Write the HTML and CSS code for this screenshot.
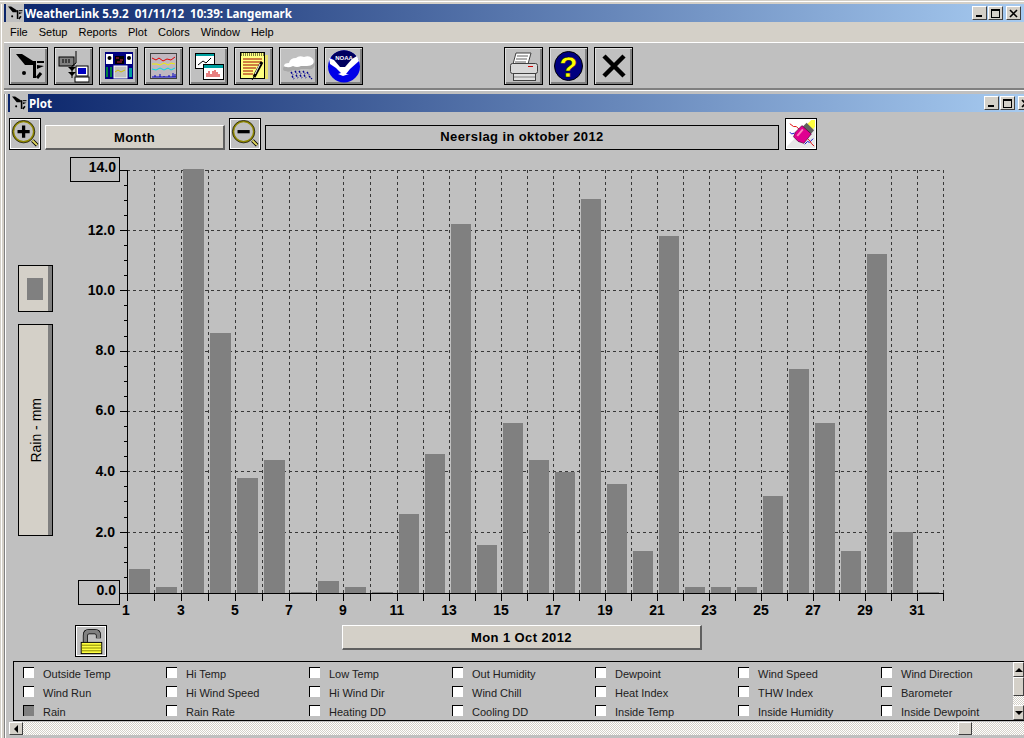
FILE: index.html
```html
<!DOCTYPE html>
<html lang="en">
<head>
<meta charset="utf-8">
<title>WeatherLink</title>
<link rel="stylesheet" href="styles.css">
</head>
<body>
<svg class="defs" width="0" height="0" aria-hidden="true">
  <symbol id="logo" viewBox="0 0 37 36">
    <polygon points="6,6 12,6 23,13 23,17 15,17" fill="#000"/>
    <rect x="23" y="13" width="3" height="17" fill="#000"/>
    <rect x="27" y="13" width="7" height="2" fill="#000"/>
    <polygon points="27,17 34,18 27,21" fill="#000"/>
    <circle cx="14" cy="25" r="2" fill="#000"/>
    <path d="M27 30 L31 25" stroke="#000" stroke-width="3"/>
  </symbol>
</svg>
<div class="app">
  <div class="titlebar main-title">
    <span class="title-icon"><svg width="16" height="16" viewBox="4 4 31 29"><use href="#logo" width="37" height="36"/></svg></span>
    <span class="title-text">WeatherLink 5.9.2  01/11/12  10:39: Langemark</span>
    <span class="win-btns">
      <span class="win-btn"><i class="g-min"></i></span>
      <span class="win-btn"><i class="g-max"></i></span>
      <span class="win-btn close"><svg width="9" height="9"><path d="M1 1 L8 8 M8 1 L1 8" stroke="#000" stroke-width="1.6"/></svg></span>
    </span>
  </div>
  <div class="menubar">
    <span>File</span><span>Setup</span><span>Reports</span><span>Plot</span><span>Colors</span><span>Window</span><span>Help</span>
  </div>
  <div class="toolbar">
    <div class="tool"><svg class="ti" viewBox="1 1 37 36"><use href="#logo" x="1" y="1" width="37" height="36"/></svg></div>
    <div class="tool"><svg class="ti" viewBox="1 1 37 36">
      <rect x="5" y="10" width="15" height="9" fill="#808080" stroke="#000"/>
      <path d="M8 13h9M8 15h9" stroke="#000" stroke-dasharray="2 1"/>
      <path d="M22 4V16L18 19M18 19V31" stroke="#000" fill="none"/>
      <polygon points="14,20 22,20 18,24" fill="#000"/><polygon points="14,25 22,25 18,29" fill="#000"/>
      <rect x="22" y="19" width="12" height="10" fill="#fff" stroke="#000"/>
      <rect x="24" y="21" width="8" height="6" fill="#0000c0"/>
      <rect x="21" y="30" width="14" height="5" fill="#fff" stroke="#000"/>
    </svg></div>
    <div class="tool"><svg class="ti" viewBox="1 1 37 36">
      <rect x="6" y="5" width="28" height="27" fill="#000080"/>
      <rect x="7" y="7" width="7" height="10" fill="#fff"/><circle cx="10.500" cy="11" r="2" fill="#000"/>
      <rect x="27" y="7" width="6" height="10" fill="#fff"/><circle cx="30" cy="11" r="2" fill="#000"/>
      <rect x="16" y="9" width="9" height="8" fill="#000"/><path d="M17 11h3M21 13h3M18 15h5" stroke="#c02040"/>
      <rect x="7" y="20" width="2" height="10" fill="#008040"/><rect x="11" y="20" width="2" height="10" fill="#008040"/>
      <rect x="15" y="19" width="13" height="12" fill="#c0c0c0" stroke="#fff"/>
      <path d="M16 25l3-2 3 2 4-2" stroke="#d0c000" fill="none"/>
      <rect x="30" y="21" width="3" height="9" fill="#00a0a0"/>
    </svg></div>
    <div class="tool"><svg class="ti" viewBox="1 1 37 36">
      <rect x="6.500" y="6.500" width="26" height="25" fill="#c0b8c0" stroke="#404040"/>
      <path d="M8 11l4 2 3-2 4 3 4-2 4 1 4-3" stroke="#e00000" fill="none"/>
      <path d="M8 17h5l3 1 4-2 4 2 3-2 4 1" stroke="#f0f000" fill="none"/>
      <path d="M8 22l4 1 4-2 4 2 4-2 3 2 4-2" stroke="#00e0e0" fill="none"/>
      <path d="M8 30h24M11 28v2M16 27v3M20 29v1M25 28v2M29 26v4M31 27v3" stroke="#0000c0"/>
    </svg></div>
    <div class="tool"><svg class="ti" viewBox="1 1 37 36">
      <rect x="6.500" y="6.500" width="19" height="15" fill="#fff" stroke="#000"/>
      <rect x="7" y="7" width="18" height="2" fill="#00a0a0"/>
      <path d="M9 18l5-4 3 2 5-5" stroke="#000" fill="none"/>
      <rect x="14.500" y="17.500" width="20" height="15" fill="#fff" stroke="#000"/>
      <rect x="15" y="18" width="19" height="3" fill="#00a0a0"/>
      <path d="M18 30v-4M20 30v-6M22 30v-3M24 30v-6M26 30v-7M28 30v-5M30 30v-3" stroke="#d00000"/>
    </svg></div>
    <div class="tool"><svg class="ti" viewBox="1 1 37 36">
      <rect x="28" y="8" width="6" height="24" fill="#e8e070"/>
      <rect x="6.500" y="5.500" width="24" height="26" fill="#ffff80" stroke="#000"/>
      <path d="M7 6h23M7 8h23" stroke="#000" stroke-dasharray="1 1"/>
      <path d="M9 12h19M9 15h19M9 18h19M9 21h13M9 24h10M9 27h10" stroke="#a00000"/>
      <path d="M28 15L20 30" stroke="#000" stroke-width="3"/>
      <path d="M26 17L21 27" stroke="#fff"/>
      <path d="M20 30l-2 3" stroke="#000"/>
    </svg></div>
    <div class="tool"><svg class="ti" viewBox="1 1 37 36">
      <path d="M4 22q0-4 6-4q1-5 7-5q3-3 8-1q5-2 9 1q3 3 1 7q-2 3-6 2H22q-4 3-8 1q-4 3-7 1q-3 0-3-2z" fill="#a8a8a8"/>
      <path d="M5 19q0-3 5-3q1-5 7-5q3-3 8-1q5-2 8 1q3 3 1 6q-2 2-6 2H22q-4 2-8 0q-4 2-6 1q-3 0-3-1z" fill="#fff"/>
      <path d="M12 25l2 3M16 24l2 3M20 24l2 3M24 24l2 3M28 25l2 3M13 29l2 3M17 28l2 3M21 28l2 3M25 28l2 3M30 29l3 3" stroke="#000090" stroke-width="1.400" stroke-dasharray="2 1"/>
    </svg></div>
    <div class="tool"><svg class="ti" viewBox="1 1 37 36">
      <circle cx="20" cy="19.500" r="16" fill="#0000e8"/>
      <path d="M7 10A16 16 0 0 1 33 10L28 13L21 21L16 21L10 14z" fill="#000060"/>
      <path d="M5 11L10 13L16 20L21 20L28 12L33 9L35 14L26 22L22 27L25 27L19 29L14 27L17 26L12 21L6 17z" fill="#fff"/>
      <text x="20" y="13" class="noaa">NOAA</text>
    </svg></div>
    <div class="tool tool-gap"><svg class="ti" viewBox="1 1 37 36">
      <polygon points="12,6 27,6 24,17 9,17" fill="#fff" stroke="#404040"/>
      <path d="M13 9h11M12 12h11M11 15h11" stroke="#606060"/>
      <rect x="6.500" y="16.500" width="27" height="10" rx="2" fill="#d8d8d8" stroke="#404040"/>
      <rect x="24" y="19" width="5" height="1" fill="#d00000"/>
      <rect x="9.500" y="26.500" width="22" height="7" fill="#e0e0e0" stroke="#404040"/>
      <path d="M10 30h21" stroke="#808080"/>
    </svg></div>
    <div class="tool"><svg class="ti" viewBox="1 1 37 36">
      <ellipse cx="19.500" cy="19" rx="14" ry="14.500" fill="#000080" stroke="#000"/>
      <text x="19.500" y="30" class="help">?</text>
    </svg></div>
    <div class="tool"><svg class="ti" viewBox="1 1 37 36">
      <path d="M10 9 L30 29 M30 9 L10 29" stroke="#000" stroke-width="4.500"/>
    </svg></div>
  </div>
  <div class="divider"></div>
  <div class="plot-window">
    <div class="titlebar plot-title">
      <span class="title-icon"><svg width="16" height="16" viewBox="4 4 31 29"><use href="#logo" width="37" height="36"/></svg></span>
      <span class="title-text">Plot</span>
      <span class="win-btns">
        <span class="win-btn"><i class="g-min"></i></span>
        <span class="win-btn"><i class="g-max"></i></span>
        <span class="win-btn close"><svg width="9" height="9"><path d="M1 1 L8 8 M8 1 L1 8" stroke="#000" stroke-width="1.6"/></svg></span>
      </span>
    </div>
    <div class="plot-controls">
      <div class="icon-btn"><svg class="bi" viewBox="0 0 30 30">
        <path d="M23 22l5 5" stroke="#000" stroke-width="4"/>
        <path d="M23 22l5 5" stroke="#e0d860" stroke-width="2"/>
        <circle cx="13.500" cy="12.500" r="11" fill="#c0c0c0" stroke="#908800" stroke-width="2"/>
        <circle cx="13.500" cy="12.500" r="12" fill="none" stroke="#000" stroke-width=".7"/>
        <path d="M13.500 6v13M7 12.500h13" stroke="#000" stroke-width="3.500"/>
      </svg></div>
      <div class="raised-btn month">Month</div>
      <div class="icon-btn"><svg class="bi" viewBox="0 0 30 30">
        <path d="M23 22l5 5" stroke="#000" stroke-width="4"/>
        <path d="M23 22l5 5" stroke="#e0d860" stroke-width="2"/>
        <circle cx="13.500" cy="12.500" r="11" fill="#c0c0c0" stroke="#908800" stroke-width="2"/>
        <circle cx="13.500" cy="12.500" r="12" fill="none" stroke="#000" stroke-width=".7"/>
        <path d="M7 12.500h13" stroke="#000" stroke-width="3.500"/>
      </svg></div>
      <div class="plot-name">Neerslag in oktober 2012</div>
      <div class="icon-btn eraser"><svg class="bi" viewBox="0 0 30 30">
        <rect width="30" height="30" fill="#fff"/>
        <polygon points="0,28 28,0 30,0 30,30 0,30" fill="#e8e8e8"/>
        <path d="M3 4l4 3 3 0 3 3" stroke="#e00000" fill="none"/>
        <path d="M3 13l2 2 3-1" stroke="#0000d0" fill="none"/>
        <path d="M19 26l3-3 2 1 4-4" stroke="#0000d0" fill="none"/>
        <path d="M22 20l3 3 1 2 3 3" stroke="#e00000" fill="none"/>
        <polygon points="21,5 26,0 30,0 30,7 27,11" fill="#ffff40"/>
        <polygon points="16,8 21,3 29,11 24,17" fill="#606060"/>
        <polygon points="9,13 16,6 26,15 18,25 12,23 7,18" fill="#e00090" stroke="#400030" stroke-width=".7"/>
        <path d="M11 17l6-7" stroke="#ff80c0" stroke-width="2"/>
      </svg></div>
    </div>
    <div class="chart-row">
      <div class="axis-col">
        <div class="series-btn"><i></i></div>
        <div class="axis-btn"><span>Rain - mm</span></div>
      </div>
      <svg class="chart" width="900" height="470" viewBox="60 150 900 470">
        <path class="grid" d="M154.500 170V593M181.500 170V593M208.500 170V593M235.500 170V593M262.500 170V593M289.500 170V593M316.500 170V593M343.500 170V593M370.500 170V593M397.500 170V593M423.500 170V593M449.500 170V593M475.500 170V593M501.500 170V593M527.500 170V593M553.500 170V593M579.500 170V593M605.500 170V593M631.500 170V593M657.500 170V593M683.500 170V593M709.500 170V593M735.500 170V593M761.500 170V593M787.500 170V593M813.500 170V593M839.500 170V593M865.500 170V593M891.500 170V593M917.500 170V593M943.500 170V593"/>
        <path class="grid" d="M127 170.500H943M127 230.500H943M127 290.500H943M127 351.500H943M127 411.500H943M127 471.500H943M127 532.500H943"/>
        <rect class="bar" x="129" y="569" width="21" height="24"/>
        <rect class="bar" x="156" y="587" width="21" height="6"/>
        <rect class="bar" x="183" y="169" width="21" height="424"/>
        <rect class="bar" x="210" y="333" width="21" height="260"/>
        <rect class="bar" x="237" y="478" width="21" height="115"/>
        <rect class="bar" x="264" y="460" width="21" height="133"/>
        <rect class="bar" x="291" y="592" width="21" height="1"/>
        <rect class="bar" x="318" y="581" width="21" height="12"/>
        <rect class="bar" x="345" y="587" width="21" height="6"/>
        <rect class="bar" x="372" y="592" width="21" height="1"/>
        <rect class="bar" x="399" y="514" width="20" height="79"/>
        <rect class="bar" x="425" y="454" width="20" height="139"/>
        <rect class="bar" x="451" y="224" width="20" height="369"/>
        <rect class="bar" x="477" y="545" width="20" height="48"/>
        <rect class="bar" x="503" y="423" width="20" height="170"/>
        <rect class="bar" x="529" y="460" width="20" height="133"/>
        <rect class="bar" x="555" y="472" width="20" height="121"/>
        <rect class="bar" x="581" y="199" width="20" height="394"/>
        <rect class="bar" x="607" y="484" width="20" height="109"/>
        <rect class="bar" x="633" y="551" width="20" height="42"/>
        <rect class="bar" x="659" y="236" width="20" height="357"/>
        <rect class="bar" x="685" y="587" width="20" height="6"/>
        <rect class="bar" x="711" y="587" width="20" height="6"/>
        <rect class="bar" x="737" y="587" width="20" height="6"/>
        <rect class="bar" x="763" y="496" width="20" height="97"/>
        <rect class="bar" x="789" y="369" width="20" height="224"/>
        <rect class="bar" x="815" y="423" width="20" height="170"/>
        <rect class="bar" x="841" y="551" width="20" height="42"/>
        <rect class="bar" x="867" y="254" width="20" height="339"/>
        <rect class="bar" x="893" y="532" width="20" height="61"/>
        <rect class="bar" x="919" y="592" width="20" height="1"/>
        <path class="axis" d="M127.500 170V601M120 593.500H944"/>
        <path class="axis" d="M120 170.500H127M120 230.500H127M120 290.500H127M120 351.500H127M120 411.500H127M120 471.500H127M120 532.500H127M124 185.500H127M124 200.500H127M124 215.500H127M124 245.500H127M124 260.500H127M124 275.500H127M124 305.500H127M124 320.500H127M124 336.500H127M124 366.500H127M124 381.500H127M124 396.500H127M124 426.500H127M124 441.500H127M124 456.500H127M124 486.500H127M124 501.500H127M124 517.500H127M124 547.500H127M124 562.500H127M124 577.500H127"/>
        <path class="axis" d="M154.500 593V601M181.500 593V601M208.500 593V601M235.500 593V601M262.500 593V601M289.500 593V601M316.500 593V601M343.500 593V601M370.500 593V601M397.500 593V601M423.500 593V601M449.500 593V601M475.500 593V601M501.500 593V601M527.500 593V601M553.500 593V601M579.500 593V601M605.500 593V601M631.500 593V601M657.500 593V601M683.500 593V601M709.500 593V601M735.500 593V601M761.500 593V601M787.500 593V601M813.500 593V601M839.500 593V601M865.500 593V601M891.500 593V601M917.500 593V601M943.500 593V601"/>
        <rect class="valbox" x="70.500" y="157.500" width="49" height="24"/>
        <rect class="valbox" x="78.500" y="580.500" width="41" height="24"/>
        <text class="yl" x="116" y="172">14.0</text>
        <text class="yl" x="115" y="235">12.0</text>
        <text class="yl" x="115" y="295">10.0</text>
        <text class="yl" x="115" y="355">8.0</text>
        <text class="yl" x="115" y="415">6.0</text>
        <text class="yl" x="115" y="476">4.0</text>
        <text class="yl" x="115" y="537">2.0</text>
        <text class="yl" x="116" y="595">0.0</text>
        <text class="xl" x="126" y="615">1</text>
        <text class="xl" x="181" y="615">3</text>
        <text class="xl" x="235" y="615">5</text>
        <text class="xl" x="289" y="615">7</text>
        <text class="xl" x="343" y="615">9</text>
        <text class="xl" x="397" y="615">11</text>
        <text class="xl" x="449" y="615">13</text>
        <text class="xl" x="501" y="615">15</text>
        <text class="xl" x="553" y="615">17</text>
        <text class="xl" x="605" y="615">19</text>
        <text class="xl" x="657" y="615">21</text>
        <text class="xl" x="709" y="615">23</text>
        <text class="xl" x="761" y="615">25</text>
        <text class="xl" x="813" y="615">27</text>
        <text class="xl" x="865" y="615">29</text>
        <text class="xl" x="917" y="615">31</text>
      </svg>
    </div>
    <div class="date-row">
      <div class="icon-btn lock"><svg class="bi" viewBox="0 0 30 30">
        <path d="M9 18V9q0-4 4-4h6q4 0 4 4v3" fill="none" stroke="#000" stroke-width="5.500"/>
        <path d="M9 18V9q0-4 4-4h6q4 0 4 4v3" fill="none" stroke="#808080" stroke-width="4"/>
        <rect x="4.500" y="16.500" width="22" height="12" fill="#ffff40" stroke="#000"/>
        <path d="M5 19.500h21M5 22.500h21M5 25.500h21" stroke="#808000"/>
      </svg></div>
      <div class="raised-btn date">Mon 1 Oct 2012</div>
    </div>
    <div class="legend-box">
      <div class="legend">
        <label><i></i>Outside Temp</label><label><i></i>Hi Temp</label><label><i></i>Low Temp</label><label><i></i>Out Humidity</label><label><i></i>Dewpoint</label><label><i></i>Wind Speed</label><label><i></i>Wind Direction</label>
        <label><i></i>Wind Run</label><label><i></i>Hi Wind Speed</label><label><i></i>Hi Wind Dir</label><label><i></i>Wind Chill</label><label><i></i>Heat Index</label><label><i></i>THW Index</label><label><i></i>Barometer</label>
        <label><i class="on"></i>Rain</label><label><i></i>Rain Rate</label><label><i></i>Heating DD</label><label><i></i>Cooling DD</label><label><i></i>Inside Temp</label><label><i></i>Inside Humidity</label><label><i></i>Inside Dewpoint</label>
      </div>
      <div class="vscroll">
        <span class="sb-btn"><b class="arrow-up"></b></span>
        <span class="sb-thumb"></span>
        <span class="sb-track"></span>
        <span class="sb-btn"><b class="arrow-down"></b></span>
      </div>
    </div>
    <div class="hscroll">
      <span class="sb-btn h"><b class="arrow-left"></b></span>
      <span class="sb-track"></span>
      <span class="sb-thumb h"></span>
      <span class="sb-track short"></span>
    </div>
  </div>
</div>
</body>
</html>
```
FILE: styles.css
```css
* { box-sizing: border-box; }
html, body { margin: 0; padding: 0; }
body { width: 1024px; height: 738px; overflow: hidden; background: #c0c0c0; font-family: "Liberation Sans", Arial, sans-serif; color: #000; }
.defs { display: block; height: 0; }
.app {
  width: 1024px; height: 738px; overflow: hidden; padding: 4px 0 0 4px;
  background:
    linear-gradient(#d4d0c8 0 1px, #fff 1px 2px, #d4d0c8 2px 4px, transparent 4px),
    linear-gradient(90deg, #d4d0c8 0 1px, #fff 1px 2px, #d4d0c8 2px 4px, #c0c0c0 4px);
}
.titlebar {
  display: flex; align-items: center; height: 18px;
  background: linear-gradient(90deg, #0a246a, #a6caf0);
  color: #fff; font-family: "Noto Sans", sans-serif; font-weight: bold; font-size: 11.6px;
}
.title-text { white-space: pre; margin-left: 1px; }
.title-icon { width: 18px; height: 18px; background: #c0c0c0; margin-left: 2px; padding: 0; border: 1px solid #c0c0c0; display: flex; }
.win-btns { margin-left: auto; display: flex; gap: 1px; padding-right: 3px; }
.win-btn { width: 15px; height: 14px; background: #d4d0c8; border: 1px solid; border-color: #fff #404040 #404040 #fff; display: flex; align-items: center; justify-content: center; }
.win-btn.close { margin-left: 2px; }
.g-min { width: 6px; height: 2px; background: #000; margin-top: 6px; margin-right: 2px; }
.g-max { width: 9px; height: 9px; border: 1px solid #000; border-top-width: 2px; }
.menubar { display: flex; gap: 11px; height: 20px; padding-left: 6px; align-items: center; background: #d4d0c8; font-size: 11px; }
.toolbar { display: flex; gap: 6px; height: 46px; padding: 4px 0 0 5px; border-top: 1px solid #fff; background: #c0c0c0; }
.tool { width: 39px; height: 38px; border: 1px solid #000; background: #c0c0c0; box-shadow: inset 1px 1px 0 #dfdfdf, inset -2px -2px 0 #808080; }
.tool-gap { margin-left: 135px; }
.ti { display: block; width: 37px; height: 36px; }
.noaa { font: bold 6px "Liberation Sans", sans-serif; fill: #fff; text-anchor: middle; }
.help { font: bold 30px "Liberation Sans", sans-serif; fill: #ffff00; stroke: #000; stroke-width: .4px; text-anchor: middle; }
.divider { height: 3px; background: linear-gradient(#808080 0 2px, #fff 2px); }
.plot-window { padding-left: 4px; background: linear-gradient(90deg, #808080 0 1px, #fff 1px 2px, #c0c0c0 2px); height: 644px; }
.plot-title { margin-top: 3px; }
.plot-title .win-btns { margin-right: -12px; }
.plot-controls { display: flex; align-items: flex-end; height: 38px; padding-left: 1px; }
.icon-btn { width: 32px; height: 32px; border: 1px solid #000; background: #c0c0c0; box-shadow: inset 0 0 0 1px #fff; padding: 1px; flex: none; }
.bi { display: block; width: 100%; height: 100%; }
.raised-btn { background: #d4d0c8; display: flex; align-items: center; justify-content: center; font-weight: bold; font-size: 13px; letter-spacing: .4px; border-bottom: 2px solid #606060; border-right: 2px solid #606060; border-top: 1px solid #fff; border-left: 1px solid #fff; }
.month { width: 180px; height: 25px; margin: 0 4px; }
.plot-name { width: 514px; height: 25px; margin: 0 6px 0 4px; border: 1px solid #000; display: flex; align-items: center; justify-content: center; font-weight: bold; font-size: 13px; letter-spacing: .4px; padding-bottom: 2px; }
.chart-row { display: flex; height: 470px; }
.axis-col { width: 35px; margin-left: 10px; padding-top: 115px; display: flex; flex-direction: column; gap: 12px; }
.series-btn, .axis-btn { background: #d4d0c8; border: 1px solid #000; box-shadow: inset -4px 0 0 #808080; display: flex; align-items: center; justify-content: center; width: 35px; }
.series-btn { height: 47px; padding-right: 2px; }
.series-btn i { display: block; width: 16px; height: 22px; background: #808080; }
.axis-btn { height: 212px; font-size: 14px; }
.axis-btn span { writing-mode: vertical-rl; transform: rotate(180deg); }
.chart { display: block; margin-left: 7px; flex: none; }
.grid { stroke: #383838; stroke-dasharray: 3 3; fill: none; }
.axis { stroke: #000; fill: none; }
.bar { fill: #808080; }
.valbox { fill: none; stroke: #000; }
.yl { font: bold 14px "Liberation Sans", sans-serif; text-anchor: end; fill: #000; }
.xl { font: bold 14px "Liberation Sans", sans-serif; text-anchor: middle; fill: #000; }
.date-row { display: flex; align-items: flex-start; padding: 5px 0 0 67px; height: 41px; }
.date { width: 360px; height: 25px; margin-left: 235px; }
.legend-box { display: flex; height: 60px; margin-left: 5px; border: 1px solid #000; border-right: 0; }
.legend { flex: 1; min-width: 0; overflow: hidden; display: grid; grid-template-columns: repeat(7, 143px); grid-auto-rows: 19px; padding: 2px 0 0 9px; }
.legend label { display: flex; align-items: center; font-size: 11px; white-space: nowrap; color: #202020; }
.legend i { width: 11px; height: 11px; margin: 0 9px 3px 0; background: #fff; border-top: 1px solid #000; border-left: 1px solid #000; flex: none; }
.legend i.on { background: #808080; }
.vscroll { width: 11px; flex: none; display: flex; flex-direction: column; }
.sb-btn { background: #d4d0c8; border: 1px solid; border-color: #fff #404040 #404040 #fff; display: flex; align-items: center; justify-content: center; height: 15px; flex: none; }
.sb-thumb { display: block; height: 19px; background: #d4d0c8; border: 1px solid; border-color: #fff #404040 #404040 #fff; flex: none; }
.sb-track { flex: 1; background: repeating-conic-gradient(#d4d0c8 0 25%, #fff 0 50%) 0 0 / 2px 2px; }
.arrow-up { border: 4px solid transparent; border-top: 0; border-bottom-color: #000; }
.arrow-down { border: 4px solid transparent; border-bottom: 0; border-top-color: #000; }
.arrow-left { border: 4px solid transparent; border-left: 0; border-right-color: #000; }
.hscroll { display: flex; height: 13px; margin: 1px 0 0 1px; }
.sb-btn.h { width: 14px; height: 13px; }
.sb-thumb.h { width: 14px; height: 13px; }
.sb-track.short { flex: none; width: 52px; }
```
